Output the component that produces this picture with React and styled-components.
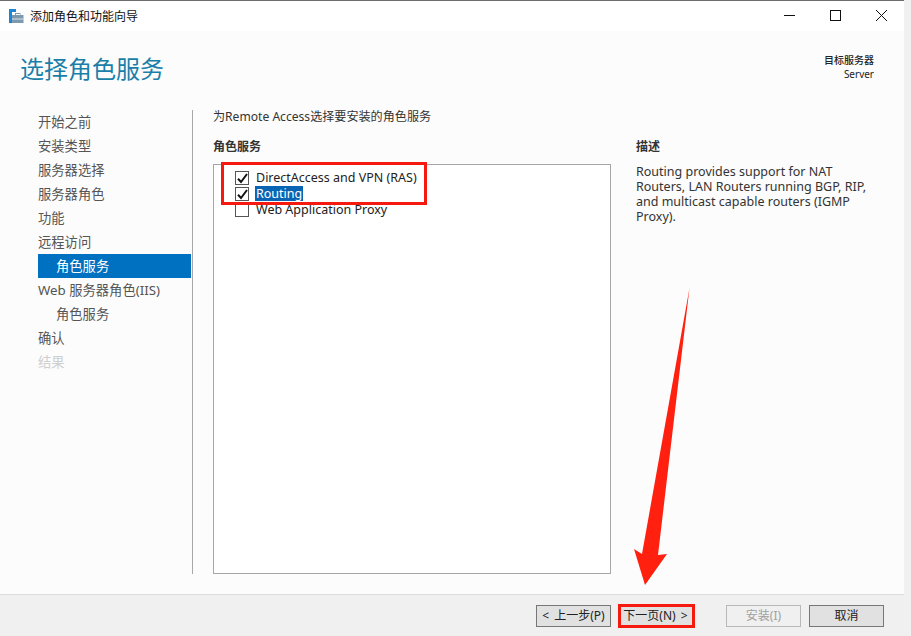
import React from "react";
import styled, { createGlobalStyle } from "styled-components";

const Global = createGlobalStyle`
  html, body { margin: 0; padding: 0; background: #f0f0f0; }
  body { width: 911px; height: 636px; overflow: hidden; font-family: "Noto Sans", "Noto Sans CJK SC", sans-serif; }
  #root { width: 911px; height: 636px; }
`;
const FONT = `"Noto Sans", "Noto Sans CJK SC", sans-serif`;

const Page = styled.div`
  position: relative;
  width: 911px;
  height: 636px;
  background: #f0f0f0;
  overflow: hidden;
`;
const Window = styled.div`
  width: 904px;
  height: 632px;
  display: flex;
  flex-direction: column;
  border-top: 1px solid #6d6d6d;
  box-sizing: border-box;
  background: #fcfcfc;
  font-family: ${FONT};
  color: #333;
`;
const TitleBar = styled.div`
  height: 30px;
  flex: none;
  background: #fff;
  display: flex;
  align-items: center;
  padding-left: 9px;
`;
const TitleText = styled.div`
  margin-left: 6px;
  font-size: 12px;
  color: #111;
  flex: 1;
  padding-bottom: 1px;
`;
const WinButtons = styled.div`
  display: flex;
  align-items: center;
  margin-bottom: 2px;
`;
const WinBtn = styled.div`
  width: 46px;
  height: 28px;
  display: flex;
  align-items: center;
  justify-content: center;
`;
const Main = styled.div`
  flex: 1;
  display: flex;
  flex-direction: column;
  min-height: 0;
`;
const Header = styled.div`
  height: 79px;
  flex: none;
  display: flex;
  justify-content: space-between;
  box-sizing: border-box;
  padding: 0 30px 0 20px;
`;
const PageTitle = styled.h1`
  margin: 20px 0 0;
  font-weight: 400;
  font-size: 24px;
  line-height: 36px;
  color: #1a7fa8;
`;
const Target = styled.div`
  margin-top: 22px;
  text-align: right;
  font-size: 10px;
  line-height: 14px;
  color: #222;
`;
const TargetLabel = styled.div`
  font-weight: 500;
`;
const Body = styled.div`
  flex: 1;
  display: flex;
  min-height: 0;
  padding-bottom: 20px;
`;
const Nav = styled.nav`
  width: 154px;
  margin-left: 38px;
  flex: none;
  display: flex;
  flex-direction: column;
`;
const NavItem = styled.div`
  height: 24px;
  line-height: 24px;
  font-size: 13.3px;
  white-space: nowrap;
  padding-left: ${(p) => (p.$sub ? 18 : 0)}px;
  color: ${(p) => (p.$active ? "#fff" : p.$disabled ? "#cfcfcf" : "#555")};
  background: ${(p) => (p.$active ? "#0070c0" : "transparent")};
  width: 153px;
  box-sizing: border-box;
`;
const Divider = styled.div`
  width: 1px;
  background: #a8a8a8;
  flex: none;
`;
const Content = styled.div`
  flex: 1;
  padding: 0 0 0 20px;
  display: flex;
  flex-direction: column;
  min-width: 0;
`;
const Instruction = styled.div`
  font-size: 12.1px;
  line-height: 14px;
  color: #333;
  margin-bottom: 15px;
`;
const Columns = styled.div`
  flex: 1;
  display: flex;
  min-height: 0;
`;
const ListColumn = styled.div`
  width: 398px;
  flex: none;
  display: flex;
  flex-direction: column;
`;
const SectionLabel = styled.div`
  font-size: 12px;
  line-height: 16px;
  font-weight: 700;
  color: #333;
  margin-bottom: 9px;
`;
const ListBox = styled.div`
  flex: 1;
  background: #fff;
  border: 1px solid #a6a6a6;
  box-sizing: border-box;
  padding: 5px 0 0 21px;
`;
const Row = styled.label`
  height: 16px;
  display: flex;
  align-items: center;
  font-size: 12.5px;
  color: #222;
  white-space: nowrap;
`;
const Box = styled.span`
  width: 14px;
  height: 14px;
  box-sizing: border-box;
  border: 1px solid #555;
  background: #fff;
  display: inline-flex;
  align-items: center;
  justify-content: center;
  margin-right: 6px;
  flex: none;
`;
const RowText = styled.span`
  line-height: 15px;
  padding: 0 1px;
  margin-bottom: 2px;
  background: ${(p) => (p.$selected ? "#0a64b4" : "transparent")};
  color: ${(p) => (p.$selected ? "#fff" : "inherit")};
`;
const DescColumn = styled.div`
  margin-left: 25px;
  width: 232px;
`;
const DescText = styled.div`
  font-size: 12.5px;
  line-height: 15px;
  color: #333;
`;
const Footer = styled.div`
  height: 38px;
  flex: none;
  background: #f0f0f0;
  border-top: 1px solid #dcdcdc;
  display: flex;
  align-items: center;
  padding-left: 536px;
  padding-top: 5px;
  box-sizing: border-box;
`;
const Button = styled.button`
  width: 75px;
  height: 22px;
  box-sizing: border-box;
  padding: 0;
  font-family: ${FONT};
  font-size: 12px;
  line-height: 18px;
  background: ${(p) => (p.disabled ? "#f0f0f0" : "#e1e1e1")};
  border: 1px solid ${(p) => (p.disabled ? "#b8b8b8" : "#777")};
  color: ${(p) => (p.disabled ? "#a0a0a0" : "#222")};
  margin-left: ${(p) => p.$gap || 0}px;
  flex: none;
  word-spacing: 2px;
`;
const RedFrame = styled.div`
  position: absolute;
  box-sizing: border-box;
  border: 3px solid #f5190f;
  left: ${(p) => p.$x}px;
  top: ${(p) => p.$y}px;
  width: ${(p) => p.$w}px;
  height: ${(p) => p.$h}px;
`;
const Arrow = styled.svg`
  position: absolute;
  left: 630px;
  top: 285px;
`;

const Check = () => (
  <svg width="11" height="11" viewBox="0 0 11 11">
    <path d="M1 5.8 L4 9 L10 1" fill="none" stroke="#111" strokeWidth="2" />
  </svg>
);

const AppIcon = () => (
  <svg width="15" height="15" viewBox="0 0 15 15">
    <rect x="0" y="0" width="7" height="3" fill="#1f86d6" />
    <rect x="0" y="3" width="3" height="11" fill="#1f86d6" />
    <rect x="3" y="6" width="11.5" height="8" fill="#7d99ad" />
    <rect x="3" y="9.5" width="11.5" height="1" fill="#d8e2ea" />
    <rect x="6.5" y="4.5" width="4.5" height="2" fill="none" stroke="#7d99ad" />
  </svg>
);

const navItems = [
  { t: "开始之前" },
  { t: "安装类型" },
  { t: "服务器选择" },
  { t: "服务器角色" },
  { t: "功能" },
  { t: "远程访问" },
  { t: "角色服务", sub: true, active: true },
  { t: "Web 服务器角色(IIS)" },
  { t: "角色服务", sub: true },
  { t: "确认" },
  { t: "结果", disabled: true },
];

const rows = [
  { t: "DirectAccess and VPN (RAS)", c: true },
  { t: "Routing", c: true, s: true },
  { t: "Web Application Proxy" },
];

export default function App() {
  return (
    <Page>
      <Global />
      <Window>
        <TitleBar>
          <AppIcon />
          <TitleText>添加角色和功能向导</TitleText>
          <WinButtons>
            <WinBtn>
              <svg width="11" height="11" viewBox="0 0 11 11"><path d="M0 5.5H11" stroke="#111" /></svg>
            </WinBtn>
            <WinBtn>
              <svg width="11" height="11" viewBox="0 0 11 11"><rect x=".5" y=".5" width="10" height="10" fill="none" stroke="#111" /></svg>
            </WinBtn>
            <WinBtn>
              <svg width="11" height="11" viewBox="0 0 11 11"><path d="M0 0L11 11M11 0L0 11" stroke="#111" /></svg>
            </WinBtn>
          </WinButtons>
        </TitleBar>
        <Main>
          <Header>
            <PageTitle>选择角色服务</PageTitle>
            <Target>
              <TargetLabel>目标服务器</TargetLabel>
              <div>Server</div>
            </Target>
          </Header>
          <Body>
            <Nav>
              {navItems.map((n, i) => (
                <NavItem key={i} $sub={n.sub} $active={n.active} $disabled={n.disabled}>{n.t}</NavItem>
              ))}
            </Nav>
            <Divider />
            <Content>
              <Instruction>为Remote Access选择要安装的角色服务</Instruction>
              <Columns>
                <ListColumn>
                  <SectionLabel>角色服务</SectionLabel>
                  <ListBox>
                    {rows.map((r) => (
                      <Row key={r.t}>
                        <Box>{r.c && <Check />}</Box>
                        <RowText $selected={r.s}>{r.t}</RowText>
                      </Row>
                    ))}
                  </ListBox>
                </ListColumn>
                <DescColumn>
                  <SectionLabel>描述</SectionLabel>
                  <DescText>
                    Routing provides support for NAT Routers, LAN Routers running BGP, RIP, and multicast capable routers (IGMP Proxy).
                  </DescText>
                </DescColumn>
              </Columns>
            </Content>
          </Body>
          <Footer>
            <Button>&lt; 上一步(P)</Button>
            <Button $gap={7}>下一页(N) &gt;</Button>
            <Button $gap={33} disabled>安装(I)</Button>
            <Button $gap={8}>取消</Button>
          </Footer>
        </Main>
      </Window>
      <RedFrame $x={221} $y={162} $w={206} $h={43} />
      <RedFrame $x={618} $y={604} $w={77} $h={24} />
      <Arrow width="62" height="302" viewBox="0 0 62 302">
        <path d="M59.5 3 L28 270 L37 269 L15 300 L4 264 L12 269 Z" fill="#ff2010" />
      </Arrow>
    </Page>
  );
}
